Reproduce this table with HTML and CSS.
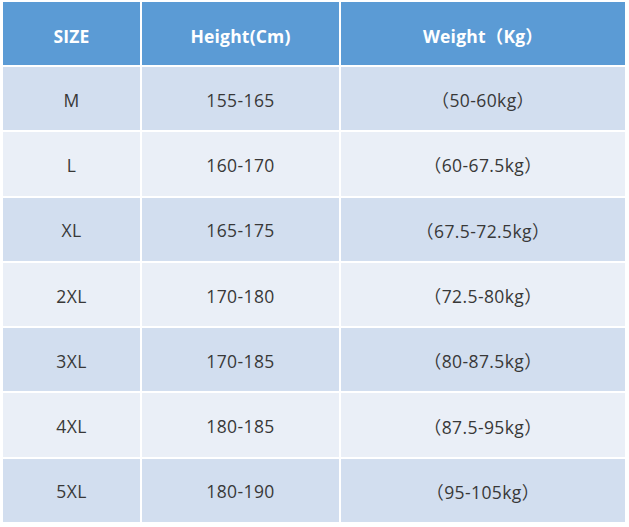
FILE: index.html
```html
<!DOCTYPE html>
<html>
<head>
<meta charset="utf-8">
<link rel="stylesheet" href="styles.css">
</head>
<body>
<div class="table">
  <div class="cell head">SIZE</div>
  <div class="cell head">Height(Cm)</div>
  <div class="cell head">Weight（Kg）</div>

  <div class="cell odd">M</div>
  <div class="cell odd">155-165</div>
  <div class="cell odd">（50-60kg）</div>

  <div class="cell even">L</div>
  <div class="cell even">160-170</div>
  <div class="cell even">（60-67.5kg）</div>

  <div class="cell odd">XL</div>
  <div class="cell odd">165-175</div>
  <div class="cell odd">（67.5-72.5kg）</div>

  <div class="cell even">2XL</div>
  <div class="cell even">170-180</div>
  <div class="cell even">（72.5-80kg）</div>

  <div class="cell odd">3XL</div>
  <div class="cell odd">170-185</div>
  <div class="cell odd">（80-87.5kg）</div>

  <div class="cell even">4XL</div>
  <div class="cell even">180-185</div>
  <div class="cell even">（87.5-95kg）</div>

  <div class="cell odd">5XL</div>
  <div class="cell odd">180-190</div>
  <div class="cell odd">（95-105kg）</div>
</div>
</body>
</html>
```

FILE: styles.css
```css
html, body {
  margin: 0;
  padding: 0;
  background: #ffffff;
}
body {
  padding: 2px 4px 4px 3px;
  font-family: "Open Sans", "Noto Sans CJK SC", sans-serif;
}
.table {
  display: grid;
  grid-template-columns: 137px 197px 284px;
  grid-template-rows: 63px repeat(7, 63.3px);
  column-gap: 2px;
  row-gap: 2px;
  width: 622px;
}
.cell {
  display: flex;
  align-items: center;
  justify-content: center;
  font-size: 17.5px;
  color: #383838;
  letter-spacing: 0.4px;
  padding-top: 2px;
  box-sizing: border-box;
}
.head {
  background: #5b9bd5;
  color: #ffffff;
  font-weight: 700;
  font-size: 17.5px;
  letter-spacing: 0.2px;
  padding-top: 4px;
}
.odd {
  background: #d2deef;
}
.even {
  background: #eaeff7;
}
```
